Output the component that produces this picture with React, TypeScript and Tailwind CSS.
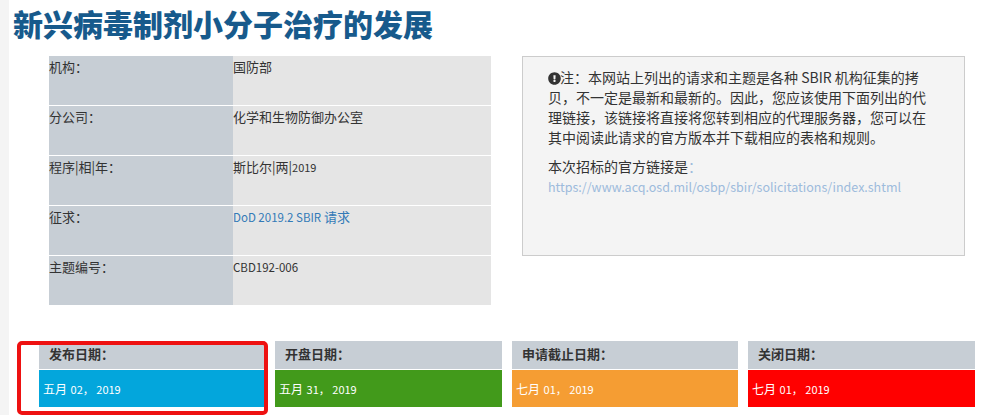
import { FaExclamationCircle } from 'react-icons/fa';

const cjk = "font-['Noto_Sans_CJK_SC',sans-serif]";

const rows: { label: string; value: React.ReactNode }[] = [
  { label: '机构：', value: '国防部' },
  { label: '分公司：', value: '化学和生物防御办公室' },
  { label: '程序|相|年：', value: <>斯比尔|两|<span className="text-[11px]">2019</span></> },
  { label: '征求：', value: <a className="text-[#337ab7]"><span className="text-[11.5px]">DoD 2019.2 SBIR</span> 请求</a> },
  { label: '主题编号：', value: <span className="text-[11.5px]">CBD192-006</span> },
];

const dates = [
  { label: '发布日期：', month: '五月', day: '02， 2019', color: 'bg-[#03a6dc]' },
  { label: '开盘日期：', month: '五月', day: '31， 2019', color: 'bg-[#429a1b]' },
  { label: '申请截止日期：', month: '七月', day: '01， 2019', color: 'bg-[#f59d33]' },
  { label: '关闭日期：', month: '七月', day: '01， 2019', color: 'bg-[#ff0000]' },
];

export default function App() {
  return (
    <div className={`relative flex h-[415px] w-[1004px] overflow-hidden bg-white text-[#333] ${cjk}`}>
      <div className="w-[9px] shrink-0 bg-[#f4f4f4]" />
      <div className="flex-1">
        <h1 className="ml-[4px] mt-[4px] h-[52px] text-[30px] leading-[38px] font-black text-[#175a8c]">
          新兴病毒制剂小分子治疗的发展
        </h1>

        <div className="flex items-start">
          {/* Details table */}
          <div className="ml-[40px] flex w-[442px] flex-col gap-px text-[13px] leading-[20px]">
            {rows.map((row) => (
              <div key={row.label} className="flex h-[49px]">
                <div className="w-[184px] bg-[#c7ced5] pt-px">{row.label}</div>
                <div className="flex-1 bg-[#e5e5e5] pt-px">{row.value}</div>
              </div>
            ))}
          </div>

          {/* Notice */}
          <div className="ml-[31px] h-[200px] w-[443px] border border-[#ccc] bg-[#f4f4f4] pl-[25px] pr-[38px] pt-[10px] text-[14px] leading-[20px]">
            <p className="mb-[9px]">
              <FaExclamationCircle className="-mr-px inline-block size-[13px] align-[-2px]" />
              注：本网站上列出的请求和主题是各种 SBIR 机构征集的拷贝，不一定是最新和最新的。因此，您应该使用下面列出的代理链接，该链接将直接将您转到相应的代理服务器，您可以在其中阅读此请求的官方版本并下载相应的表格和规则。
            </p>
            <p>本次招标的官方链接是<span className="text-[#9dbbdc]">：</span></p>
            <a className="text-[12.5px] text-[#9dbbdc]">https://www.acq.osd.mil/osbp/sbir/solicitations/index.shtml</a>
          </div>
        </div>

        {/* Key dates */}
        <div className="ml-[30px] mt-[36px] grid w-[936px] grid-cols-[226px_227px_226px_227px] gap-[10px]">
          {dates.map((d) => (
            <div key={d.label} className="flex flex-col gap-px">
              <div className="h-[28px] bg-[#c7ced5] pl-[10px] text-[13px] font-semibold leading-[26px]">{d.label}</div>
              <div className={`h-[37px] pl-[4px] leading-[35px] text-white ${d.color}`}>
                <span className="text-[12px]">{d.month}</span> <span className="text-[11px]">{d.day}</span>
              </div>
            </div>
          ))}
        </div>
      </div>

      {/* Red highlight drawn on top of the screenshot */}
      <div className="absolute left-[17px] top-[341px] h-[74px] w-[251px] rounded-[5px] border-[4px] border-[#ee1111]" />
    </div>
  );
}
